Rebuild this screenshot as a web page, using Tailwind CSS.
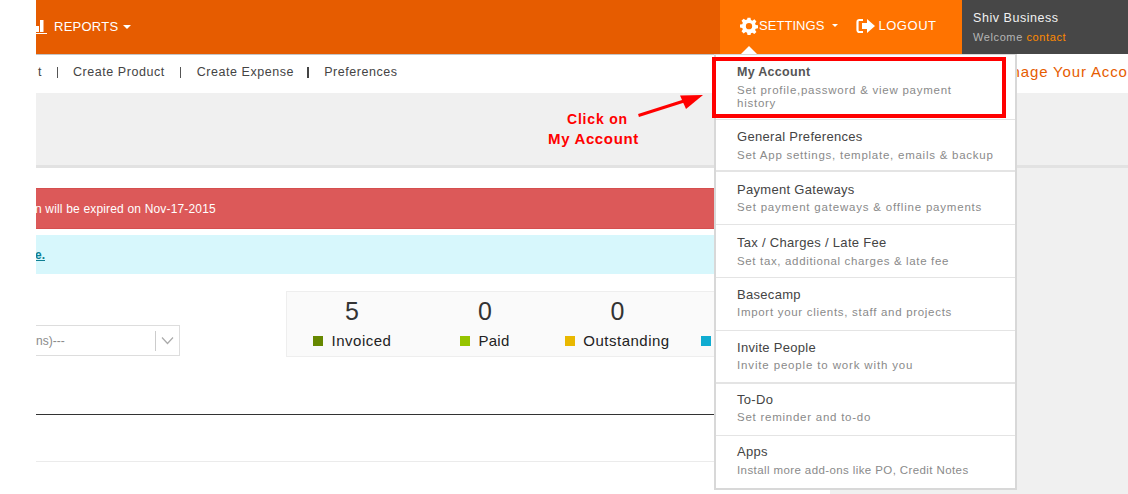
<!DOCTYPE html>
<html>
<head>
<meta charset="utf-8">
<script src="https://cdn.jsdelivr.net/npm/@tailwindcss/browser@4"></script>
</head>
<body class="bg-white">
<div class="relative w-[1128px] h-[494px] overflow-hidden bg-white font-['Liberation_Sans',Arimo,sans-serif]">
  <header class="h-[55px] flex bg-white">
    <div class="w-9"></div>
    <div class="w-[684px] h-[55px] bg-[#e65c00] border-b border-[#c4c4c4] flex items-center pb-[1px] text-white text-[13px] tracking-[0.25px]">
      <svg class="w-[12px] h-[14px] mr-[6px] shrink-0" viewBox="0 0 12 14" fill="#fff"><rect x="0" y="6" width="3" height="6"/><rect x="4" y="0" width="3.500" height="12"/><rect x="0" y="13" width="11" height="1"/></svg>
      <span>REPORTS</span>
      <span class="ml-[5px] w-0 h-0 border-x-[4px] border-x-transparent border-t-[4px] border-t-white"></span>
    </div>
    <div class="w-[242px] h-[55px] bg-[#ff7300] border-b border-[#c4c4c4] flex items-center pl-[20px] text-white text-[13px] tracking-[0.05px] pb-[3px]">
      <svg class="w-[18px] h-[18px]" viewBox="0 0 24 24" fill="#fff"><path fill-rule="evenodd" d="M10 1h4l.6 3.100 1.900.8L19.200 3.100 21.900 6l-1.800 2.600.8 1.900L24 11v4l-3.100.5-.8 1.900 1.800 2.700-2.800 2.700-2.600-1.800-1.900.8L14 24h-4l-.6-3.100-1.900-.8-2.700 1.800L2 19.100l1.800-2.700-.8-1.900L0 14v-4l3-.5.8-1.900L2 5l2.800-2.700 2.700 1.800 1.900-.8zM12 8a4.200 4.200 0 1 0 0 8.400a4.200 4.200 0 0 0 0-8.400z"/></svg>
      <span class="ml-[1px]">SETTINGS</span>
      <span class="ml-[8px] w-0 h-0 border-x-[3.500px] border-x-transparent border-t-[3.500px] border-t-white"></span>
      <svg class="ml-[18px] w-[19px] h-[16px]" viewBox="0 0 19 16" fill="none"><path d="M7 2H3.500A1.800 1.800 0 0 0 1.500 4v8a1.800 1.800 0 0 0 2 2H7" stroke="#fff" stroke-width="2.200"/><path fill="#fff" d="M6 5h5V1l8 7-8 7v-4H6z"/></svg>
      <span class="ml-[3px] tracking-[0.55px]">LOGOUT</span>
    </div>
    <div class="flex-1 h-[54px] bg-[#474747] pl-[11px] pt-[10px]">
      <p class="text-[#f2f2f2] text-[12.500px] leading-[16px] tracking-[0.55px]">Shiv Business</p>
      <p class="mt-[4px] text-[#b5b5b5] text-[11px] leading-[14px] tracking-[0.6px]">Welcome <span class="text-[#ff8a00]">contact</span></p>
    </div>
  </header>

  <main class="flex">
    <div class="w-9 shrink-0 bg-white relative z-10"></div>
    <div class="w-[1092px] shrink-0 overflow-hidden">
      <nav class="h-[38px] pb-[4px] flex items-center text-[12.500px] text-[#444] tracking-[0.55px]">
        <span class="w-[6px] shrink-0 flex justify-end overflow-hidden whitespace-nowrap">t</span>
        <span class="ml-[15px] w-px h-[11px] bg-[#555] shrink-0"></span>
        <span class="ml-[15px] shrink-0">Create Product</span>
        <span class="ml-[15px] w-px h-[11px] bg-[#555] shrink-0"></span>
        <span class="ml-4 shrink-0">Create Expense</span>
        <span class="ml-[13px] w-[2px] h-[11px] bg-[#444] shrink-0"></span>
        <span class="ml-[15px] shrink-0">Preferences</span>
        <span class="ml-[614px] shrink-0 text-[#e65c00] text-[15px] tracking-[0.85px] whitespace-nowrap">nage Your Acco</span>
      </nav>
      <div class="h-[75px] bg-[#f0f0f0] border-b-[3px] border-[#e2e2e2]"></div>
      <div class="flex">
        <div class="w-[794px] shrink-0 bg-white h-[326px]">
          <div class="mt-[20px] h-[41px] bg-[#dc5959] border-y border-[#d54f4f] flex items-center text-white text-[12px] leading-none tracking-[0.17px]">
            <span class="-ml-[1px]">n will be expired on Nov-17-2015</span>
          </div>
          <div class="mt-[6px] h-[39px] bg-[#d7f7fc] flex items-center text-[#0e7f93] text-[12px] underline overflow-hidden">
            <span class="-ml-[1px] font-bold">e.</span>
          </div>
          <div class="flex items-start mt-[17px]">
            <div class="mt-[34px] w-[144px] h-[31px] border border-l-0 border-[#ddd] bg-white flex items-center text-[#8a8a8a] text-[12px]">
              <span class="flex-1">ns)---</span>
              <span class="w-px h-[20px] bg-[#ccc]"></span>
              <svg class="w-[23px] h-[9px]" viewBox="0 0 23 9" fill="none"><path d="M6 1.500l5.500 6 5.500-6" stroke="#aaa" stroke-width="1.200"/></svg>
            </div>
            <div class="ml-[106px] w-[544px] h-[66px] border border-[#eee] bg-[#fafafa] flex text-[#222]">
              <div class="w-[130px] flex flex-col items-center">
                <span class="text-[25px] leading-[36px] text-[#333] mt-px">5</span>
                <span class="flex items-center text-[15px] tracking-[0.5px] leading-[18px] mt-[3px]"><i class="w-[10px] h-[10px] bg-[#668800] mr-[9px]"></i>Invoiced</span>
              </div>
              <div class="w-[136px] flex flex-col items-center">
                <span class="text-[25px] leading-[36px] text-[#333] mt-px">0</span>
                <span class="flex items-center text-[15px] tracking-[0.3px] leading-[18px] mt-[3px]"><i class="w-[10px] h-[10px] bg-[#95c400] mr-[8px]"></i>Paid</span>
              </div>
              <div class="w-[129px] flex flex-col items-center">
                <span class="text-[25px] leading-[36px] text-[#333] mt-px">0</span>
                <span class="flex items-center text-[15px] tracking-[0.5px] leading-[18px] mt-[3px]"><i class="w-[10px] h-[10px] bg-[#e9b800] mr-[8px]"></i>Outstanding</span>
              </div>
              <div class="flex-1 pl-[19px] pt-[44px]"><i class="block w-[10px] h-[10px] bg-[#10acd1]"></i></div>
            </div>
          </div>
          <div class="mt-[57px] border-t border-[#333]"></div>
          <div class="mt-[46px] border-t border-[#ebebeb]"></div>
        </div>
        <div class="flex-1 bg-[#f0f0f0] h-[326px]"></div>
      </div>
    </div>
  </main>

  <span class="absolute left-[567px] top-[111px] text-[#f00] text-[14px] font-bold leading-[16px] tracking-[0.8px]">Click on</span>
  <span class="absolute left-[548px] top-[130px] text-[#f00] text-[15px] font-bold leading-[18px] tracking-[0.65px]">My Account</span>
  <svg class="absolute left-[636px] top-[92px]" width="70" height="26" viewBox="0 0 70 26"><path d="M2.500 23.500 48 9" stroke="#f00" stroke-width="3"/><path d="M67 3 44 3.500 50 17z" fill="#f00"/></svg>

  <div class="absolute left-[714px] top-[54px] w-[303px] h-[436px] bg-white border-x-2 border-b-2 border-t border-[#d8d8d8] text-[13px] tracking-[0.3px]">
    <span class="absolute left-[25px] -top-[9px] w-0 h-0 border-x-[8px] border-x-transparent border-b-[8px] border-b-white"></span>
    <ul>
      <li class="h-[65px] pl-[21px] border-b border-[#e4e4e4] pt-[9px] text-[#444]"><p class="leading-[16px] font-bold text-[12.500px] text-[#555]">My Account</p><p class="mt-[4px] w-[240px] text-[11.500px] tracking-[0.75px] leading-[13px] text-[#8a8a8a]">Set profile,password &amp; view payment history</p></li>
      <li class="h-[52px] pl-[21px] border-b-2 border-[#e4e4e4] pt-[9px] text-[#444]"><p class="leading-[16px]">General Preferences</p><p class="mt-[4px] text-[11.500px] tracking-[0.75px] leading-[13px] text-[#8a8a8a]">Set App settings, template, emails &amp; backup</p></li>
      <li class="h-[53px] pl-[21px] border-b border-[#e4e4e4] pt-[10px] text-[#444]"><p class="leading-[16px]">Payment Gateways</p><p class="mt-[3px] text-[11.500px] tracking-[0.8px] leading-[13px] text-[#8a8a8a]">Set payment gateways &amp; offline payments</p></li>
      <li class="h-[53px] pl-[21px] border-b border-[#e4e4e4] pt-[10px] text-[#444]"><p class="leading-[16px]">Tax / Charges / Late Fee</p><p class="mt-[4px] text-[11.500px] tracking-[0.65px] leading-[13px] text-[#8a8a8a]">Set tax, additional charges &amp; late fee</p></li>
      <li class="h-[53px] pl-[21px] border-b border-[#e4e4e4] pt-[9px] text-[#444]"><p class="leading-[16px]">Basecamp</p><p class="mt-[3px] text-[11.500px] tracking-[0.7px] leading-[13px] text-[#8a8a8a]">Import your clients, staff and projects</p></li>
      <li class="h-[53px] pl-[21px] border-b-2 border-[#e4e4e4] pt-[9px] text-[#444]"><p class="leading-[16px]">Invite People</p><p class="mt-[3px] text-[11.500px] tracking-[0.85px] leading-[13px] text-[#8a8a8a]">Invite people to work with you</p></li>
      <li class="h-[52px] pl-[21px] border-b border-[#e4e4e4] pt-[8px] text-[#444]"><p class="leading-[16px]">To-Do</p><p class="mt-[3px] text-[11.500px] tracking-[0.75px] leading-[13px] text-[#8a8a8a]">Set reminder and to-do</p></li>
      <li class="h-[53px] pl-[21px] pt-[8px] text-[#444]"><p class="leading-[16px]">Apps</p><p class="mt-[4px] text-[11.500px] tracking-[0.4px] leading-[13px] text-[#8a8a8a]">Install more add-ons like PO, Credit Notes</p></li>
    </ul>
  </div>
  <div class="absolute left-[712px] top-[57px] w-[294px] h-[61px] border-[4px] border-[#f00]"></div>
</div>
</body>
</html>
